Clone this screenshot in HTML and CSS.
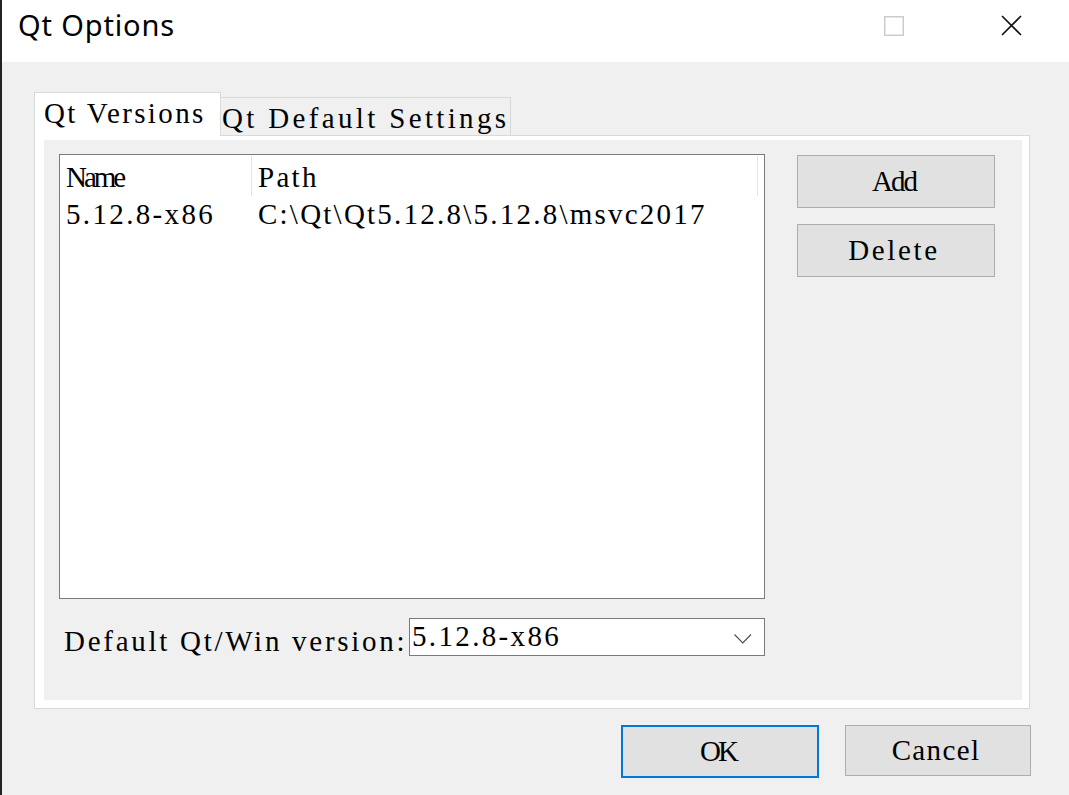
FILE: index.html
```html
<!DOCTYPE html>
<html>
<head>
<meta charset="utf-8">
<title>Qt Options</title>
<link rel="stylesheet" href="styles.css">
</head>
<body>
<div class="window">
  <div class="titlebar">
    <div class="title">Qt Options</div>
    <div class="caption">
      <svg class="cap-max" width="20" height="20" viewBox="0 0 20 20"><rect x="0.75" y="0.75" width="18.5" height="18.5" fill="none" stroke="#cccccc" stroke-width="1.5"/></svg>
      <svg class="cap-close" width="21" height="21" viewBox="0 0 21 21"><path d="M1 1 L20 20 M20 1 L1 20" stroke="#111" stroke-width="1.6" fill="none"/></svg>
    </div>
  </div>
  <div class="content">
    <div class="tabbar">
      <div class="tab tab-active"><span class="ls-versions">Qt Versions</span></div>
      <div class="tab tab-inactive"><span class="ls-defaults">Qt Default Settings</span></div>
    </div>
    <div class="pane">
      <div class="page">
        <div class="top-row">
          <div class="listbox">
            <div class="lv-header">
              <div class="hdr hdr-name"><span class="ls-name">Name</span></div>
              <div class="hdr hdr-path"><span class="ls-path">Path</span></div>
            </div>
            <div class="lv-row">
              <div class="cell cell-name"><span class="ls-ver">5.12.8-x86</span></div>
              <div class="cell cell-path"><span class="ls-dir">C:\Qt\Qt5.12.8\5.12.8\msvc2017</span></div>
            </div>
          </div>
          <div class="side-buttons">
            <button class="btn"><span class="ls-add">Add</span></button>
            <button class="btn"><span class="ls-delete">Delete</span></button>
          </div>
        </div>
        <div class="version-row">
          <div class="version-label"><span class="ls-label">Default Qt/Win version:</span></div>
          <div class="combo">
            <span class="ls-ver">5.12.8-x86</span>
            <svg class="chevron" width="18" height="10" viewBox="0 0 18 10"><polyline points="0.5,0.5 8.75,9 17,0.5" fill="none" stroke="#4a4a4a" stroke-width="1.1"/></svg>
          </div>
        </div>
      </div>
    </div>
    <div class="dialog-buttons">
      <button class="btn btn-ok"><span class="ls-ok">OK</span></button>
      <button class="btn btn-cancel"><span class="ls-cancel">Cancel</span></button>
    </div>
  </div>
</div>
</body>
</html>
```

FILE: styles.css
```css
html, body {
  margin: 0;
  padding: 0;
}
body {
  width: 1069px;
  height: 795px;
  overflow: hidden;
  background: #f0f0f0;
  color: #000;
}
.window {
  height: 795px;
  box-sizing: border-box;
  border-left: 2px solid #232323;
  background: #f0f0f0;
}
.titlebar {
  height: 62px;
  background: #ffffff;
  display: flex;
  align-items: flex-start;
}
.title {
  font-family: "Noto Sans", "Open Sans", sans-serif;
  font-size: 29px;
  line-height: 29px;
  letter-spacing: 0.85px;
  margin-top: 10px;
  margin-left: 16px;
  white-space: nowrap;
}
.caption {
  margin-left: auto;
  margin-right: 47px;
  margin-top: 15px;
  display: flex;
  align-items: flex-start;
  gap: 97px;
}
.cap-max {
  margin-top: 1px;
}
.content {
  padding: 30px 39px 0 32px;
  font-family: "Liberation Serif", serif;
  font-size: 29px;
}
.tabbar {
  display: flex;
  align-items: flex-end;
  height: 43px;
}
.tab {
  box-sizing: border-box;
  border: 1px solid #d9d9d9;
  border-bottom: none;
  line-height: 32px;
  white-space: nowrap;
}
.tab-active {
  width: 187px;
  height: 44px;
  margin-bottom: -1px;
  background: #ffffff;
  padding: 4px 0 0 9px;
  z-index: 1;
}
.tab-inactive {
  width: 291px;
  height: 38px;
  margin-left: -1px;
  background: #f0f0f0;
  padding: 4px 0 0 1px;
}
.pane {
  box-sizing: border-box;
  height: 574px;
  border: 1px solid #d9d9d9;
  background: #ffffff;
  padding: 4px 7px 8px 9px;
}
.page {
  box-sizing: border-box;
  height: 560px;
  background: #f0f0f0;
  padding: 14px 0 0 15px;
}
.top-row {
  display: flex;
  align-items: flex-start;
  gap: 32px;
}
.listbox {
  box-sizing: border-box;
  width: 706px;
  height: 445px;
  border: 1px solid #7a7a7a;
  background: #ffffff;
}
.lv-header {
  display: flex;
  height: 41px;
}
.hdr {
  box-sizing: border-box;
  height: 40px;
  margin-top: 1px;
  border-right: 1px solid #e3e3e3;
  padding: 5px 0 0 6px;
  line-height: 32px;
  white-space: nowrap;
}
.hdr-name {
  width: 192px;
}
.hdr-path {
  width: 506px;
}
.lv-row {
  display: flex;
  padding-top: 2px;
  line-height: 32px;
  white-space: nowrap;
}
.cell {
  box-sizing: border-box;
}
.cell-name {
  width: 192px;
  padding-left: 6px;
}
.cell-path {
  padding-left: 6px;
}
.side-buttons {
  display: flex;
  flex-direction: column;
  gap: 16px;
  margin-top: 1px;
}
.btn {
  box-sizing: border-box;
  width: 198px;
  height: 53px;
  margin: 0;
  padding: 0 4px 0 0;
  background: #e1e1e1;
  border: 1px solid #adadad;
  border-radius: 0;
  font-family: "Liberation Serif", serif;
  font-size: 29px;
  line-height: 51px;
  color: #000;
  text-align: center;
  white-space: nowrap;
}
.version-row {
  display: flex;
  align-items: flex-start;
  margin-top: 19px;
  padding-left: 5px;
}
.version-label {
  width: 340px;
  padding-top: 7px;
  line-height: 32px;
  white-space: nowrap;
}
.combo {
  box-sizing: border-box;
  width: 356px;
  height: 38px;
  margin-left: 5px;
  border: 1px solid #7a7a7a;
  background: #ffffff;
  display: flex;
  align-items: flex-start;
  padding: 1px 12px 0 2px;
  line-height: 32px;
  white-space: nowrap;
}
.chevron {
  margin-left: auto;
  margin-top: 14px;
}
.dialog-buttons {
  display: flex;
  justify-content: flex-end;
  align-items: flex-start;
  gap: 26px;
  margin-top: 16px;
  margin-right: -1px;
}
.btn-ok {
  width: 198px;
  height: 53px;
  border: 2px solid #0078d7;
  line-height: 49px;
}
.btn-cancel {
  width: 186px;
  height: 51px;
  line-height: 49px;
}
.ls-versions { letter-spacing: 2.37px; }
.ls-defaults { letter-spacing: 3.34px; }
.ls-name { letter-spacing: -3px; }
.ls-path { letter-spacing: 2.3px; }
.ls-ver { letter-spacing: 2.35px; }
.ls-dir { letter-spacing: 2.23px; }
.ls-add { letter-spacing: -2px; }
.ls-delete { letter-spacing: 2.66px; }
.ls-label { letter-spacing: 2.72px; }
.ls-ok { letter-spacing: -3px; }
.ls-cancel { letter-spacing: 1.36px; }
```
